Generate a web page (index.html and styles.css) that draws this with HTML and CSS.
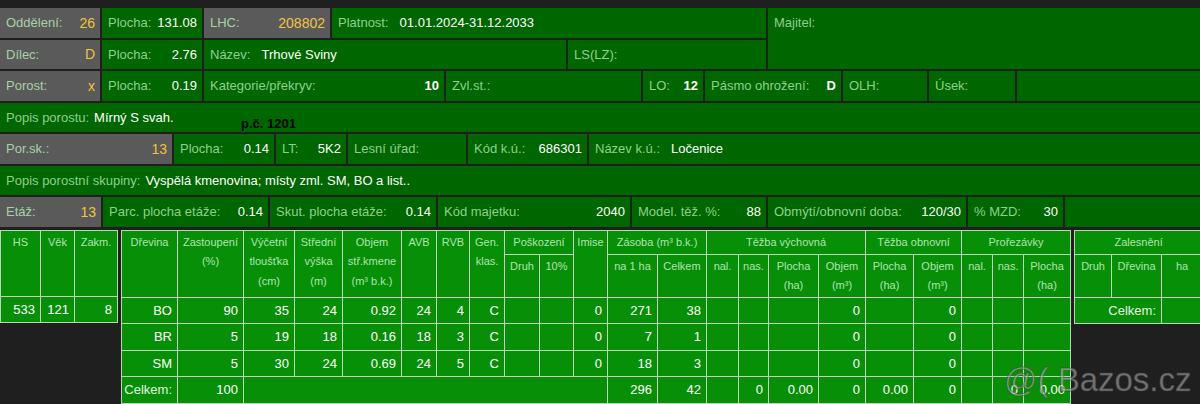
FILE: index.html
```html
<!DOCTYPE html>
<html lang="cs">
<head>
<meta charset="utf-8">
<title>Porost</title>
<link rel="stylesheet" href="styles.css">
</head>
<body>
<div class="page">
  <div class="top">
    <div class="top-left">
      <div class="row">
        <div class="cell gray w100"><span class="lbl">Oddělení:</span><span class="val org">26</span></div>
        <div class="cell w100"><span class="lbl">Plocha:</span><span class="val">131.08</span></div>
        <div class="cell gray w126"><span class="lbl">LHC:</span><span class="val org">208802</span></div>
        <div class="cell grow"><span class="lbl">Platnost:</span><span class="val near">01.01.2024-31.12.2033</span></div>
      </div>
      <div class="row">
        <div class="cell gray w100"><span class="lbl">Dílec:</span><span class="val org">D</span></div>
        <div class="cell w100"><span class="lbl">Plocha:</span><span class="val">2.76</span></div>
        <div class="cell w362"><span class="lbl">Název:</span><span class="val near">Trhové Sviny</span></div>
        <div class="cell grow"><span class="lbl">LS(LZ):</span></div>
      </div>
    </div>
    <div class="cell majitel"><span class="lbl">Majitel:</span></div>
  </div>

  <div class="row">
    <div class="cell gray w100"><span class="lbl">Porost:</span><span class="val org">x</span></div>
    <div class="cell w100"><span class="lbl">Plocha:</span><span class="val">0.19</span></div>
    <div class="cell w240"><span class="lbl">Kategorie/překryv:</span><span class="val b">10</span></div>
    <div class="cell w195"><span class="lbl">Zvl.st.:</span></div>
    <div class="cell w60"><span class="lbl">LO:</span><span class="val b">12</span></div>
    <div class="cell w136"><span class="lbl">Pásmo ohrožení:</span><span class="val b">D</span></div>
    <div class="cell w84"><span class="lbl">OLH:</span></div>
    <div class="cell w86"><span class="lbl">Úsek:</span></div>
    <div class="cell grow"></div>
  </div>

  <div class="row">
    <div class="cell grow"><span class="lbl">Popis porostu:</span><span class="val near-s">Mírný S svah.</span></div>
  </div>

  <div class="row">
    <div class="cell gray w172"><span class="lbl">Por.sk.:</span><span class="val org">13</span></div>
    <div class="cell w100"><span class="lbl">Plocha:</span><span class="val">0.14</span></div>
    <div class="cell w70"><span class="lbl">LT:</span><span class="val">5K2</span></div>
    <div class="cell w118"><span class="lbl">Lesní úřad:</span></div>
    <div class="cell w119"><span class="lbl">Kód k.ú.:</span><span class="val">686301</span></div>
    <div class="cell grow"><span class="lbl">Název k.ú.:</span><span class="val near">Ločenice</span></div>
  </div>

  <div class="row">
    <div class="cell grow"><span class="lbl">Popis porostní skupiny:</span><span class="val near-s">Vyspělá kmenovina; místy zml. SM, BO a list..</span></div>
  </div>

  <div class="row">
    <div class="cell gray w101"><span class="lbl">Etáž:</span><span class="val org">13</span></div>
    <div class="cell w165"><span class="lbl">Parc. plocha etáže:</span><span class="val">0.14</span></div>
    <div class="cell w166"><span class="lbl">Skut. plocha etáže:</span><span class="val">0.14</span></div>
    <div class="cell w192"><span class="lbl">Kód majetku:</span><span class="val">2040</span></div>
    <div class="cell w134"><span class="lbl">Model. těž. %:</span><span class="val">88</span></div>
    <div class="cell w198"><span class="lbl">Obmýtí/obnovní doba:</span><span class="val">120/30</span></div>
    <div class="cell w95"><span class="lbl">% MZD:</span><span class="val">30</span></div>
    <div class="cell grow"></div>
  </div>

  <div class="tables">
    <table class="t1">
      <colgroup><col class="c40"><col class="c34"><col class="c43"></colgroup>
      <tr class="hr-big"><th>HS</th><th>Věk</th><th>Zakm.</th></tr>
      <tr class="dr"><td>533</td><td>121</td><td>8</td></tr>
    </table>

    <table class="t2">
      <colgroup>
        <col class="c56"><col class="c66"><col class="c51"><col class="c48"><col class="c59">
        <col class="c35"><col class="c33"><col class="c35"><col class="c35"><col class="c34">
        <col class="c34"><col class="c50"><col class="c49"><col class="c32"><col class="c30">
        <col class="c50"><col class="c47"><col class="c48"><col class="c48"><col class="c31">
        <col class="c31"><col class="c47">
      </colgroup>
      <tr class="hr1">
        <th rowspan="2">Dřevina</th>
        <th rowspan="2">Zastoupení<br>(%)</th>
        <th rowspan="2">Výčetní<br>tloušťka<br>(cm)</th>
        <th rowspan="2">Střední<br>výška<br>(m)</th>
        <th rowspan="2">Objem<br>stř.kmene<br>(m³ b.k.)</th>
        <th rowspan="2">AVB</th>
        <th rowspan="2">RVB</th>
        <th rowspan="2">Gen.<br>klas.</th>
        <th colspan="2">Poškození</th>
        <th rowspan="2">Imise</th>
        <th colspan="2">Zásoba (m³ b.k.)</th>
        <th colspan="4">Těžba výchovná</th>
        <th colspan="2">Těžba obnovní</th>
        <th colspan="3">Prořezávky</th>
      </tr>
      <tr class="hr2">
        <th>Druh</th><th>10%</th>
        <th>na 1 ha</th><th>Celkem</th>
        <th>nal.</th><th>nas.</th><th>Plocha<br>(ha)</th><th>Objem<br>(m³)</th>
        <th>Plocha<br>(ha)</th><th>Objem<br>(m³)</th>
        <th>nal.</th><th>nas.</th><th>Plocha<br>(ha)</th>
      </tr>
      <tr class="dr">
        <td>BO</td><td>90</td><td>35</td><td>24</td><td>0.92</td><td>24</td><td>4</td><td>C</td><td></td><td></td><td>0</td><td>271</td><td>38</td><td></td><td></td><td></td><td>0</td><td></td><td>0</td><td></td><td></td><td></td>
      </tr>
      <tr class="dr">
        <td>BR</td><td>5</td><td>19</td><td>18</td><td>0.16</td><td>18</td><td>3</td><td>C</td><td></td><td></td><td>0</td><td>7</td><td>1</td><td></td><td></td><td></td><td>0</td><td></td><td>0</td><td></td><td></td><td></td>
      </tr>
      <tr class="dr">
        <td>SM</td><td>5</td><td>30</td><td>24</td><td>0.69</td><td>24</td><td>5</td><td>C</td><td></td><td></td><td>0</td><td>18</td><td>3</td><td></td><td></td><td></td><td>0</td><td></td><td>0</td><td></td><td></td><td></td>
      </tr>
      <tr class="dr">
        <td class="tot">Celkem:</td><td>100</td><td colspan="9"></td><td>296</td><td>42</td><td></td><td>0</td><td>0.00</td><td>0</td><td>0.00</td><td>0</td><td></td><td>0</td><td>0.00</td>
      </tr>
    </table>

    <table class="t3">
      <colgroup><col class="c37"><col class="c50"><col class="c41"></colgroup>
      <tr class="hr1"><th colspan="3">Zalesnění</th></tr>
      <tr class="hr2"><th>Druh</th><th>Dřevina</th><th>ha</th></tr>
      <tr class="dr"><td colspan="2" class="tot">Celkem:</td><td></td></tr>
    </table>
  </div>

  <div class="pc">p.č. 1201</div>
  <div class="wm">@( Bazos.cz</div>
</div>
</body>
</html>
```

FILE: styles.css
```css
* { box-sizing: border-box; }
html, body { margin: 0; padding: 0; background: #1f1f1f; }
body { font-family: "Liberation Sans", Arial, sans-serif; font-size: 13px; }

.page {
  position: relative;
  width: 1200px;
  height: 404px;
  overflow: hidden;
  padding-top: 8px;
  display: flex;
  flex-direction: column;
  gap: 2px;
  background: #1f1f1f;
}

.top {
  display: grid;
  grid-template-columns: 766px 1fr;
  gap: 2px;
}
.top-left { display: flex; flex-direction: column; gap: 2px; }

.row { display: flex; gap: 2px; height: 29.5px; }

.cell {
  display: flex;
  align-items: center;
  padding: 0 5px 0 6px;
  background: #006600;
  white-space: nowrap;
  overflow: hidden;
  flex: 0 0 auto;
}
.cell.gray { background: #5a5a5a; }
.cell.grow { flex: 1 1 auto; }
.majitel { align-items: flex-start; padding-top: 7px; }

.lbl { color: #8ed08e; }
.gray .lbl { color: #a6d2a6; }
.val { color: #ffffff; margin-left: auto; }
.val.near { margin-left: 11px; }
.val.near-s { margin-left: 5px; }
.val.org { color: #f2c43c; font-size: 14px; }
.val.b { font-weight: bold; }

.w60 { width: 60px; }
.w70 { width: 70px; }
.w84 { width: 84px; }
.w86 { width: 86px; }
.w95 { width: 95px; }
.w100 { width: 100px; }
.w101 { width: 101px; }
.w118 { width: 118px; }
.w119 { width: 119px; }
.w126 { width: 126px; }
.w134 { width: 134px; }
.w136 { width: 136px; }
.w165 { width: 165px; }
.w166 { width: 166px; }
.w172 { width: 172px; }
.w192 { width: 192px; }
.w195 { width: 195px; }
.w198 { width: 198px; }
.w240 { width: 240px; }
.w362 { width: 362px; }

.tables {
  display: flex;
  gap: 3px;
  align-items: flex-start;
  margin-top: 1px;
}

table {
  border-collapse: collapse;
  table-layout: fixed;
  background: #088f08;
  color: #ffffff;
  font-size: 13px;
}
.t1 { width: 117px; }
.t2 { width: 949px; }
.t3 { width: 128px; }

th, td { border: 1px solid #bcd6bc; }
th {
  font-weight: normal;
  font-size: 11px;
  line-height: 19.5px;
  color: #b0e4b0;
  vertical-align: top;
  text-align: center;
  padding: 2px 1px 0;
}
td {
  text-align: right;
  padding: 0 5px 0 2px;
  height: 26.5px;
}
td.tot { color: #e6f2e6; }

.hr-big { height: 66px; }
.hr1 { height: 24px; }
.hr2 { height: 43px; }

.c30 { width: 30px; } .c31 { width: 31px; } .c32 { width: 32px; } .c33 { width: 33px; }
.c34 { width: 34px; } .c35 { width: 35px; } .c37 { width: 37px; } .c40 { width: 40px; }
.c41 { width: 41px; } .c43 { width: 43px; } .c47 { width: 47px; } .c48 { width: 48px; }
.c49 { width: 49px; } .c50 { width: 50px; } .c51 { width: 51px; } .c56 { width: 56px; }
.c59 { width: 59px; } .c66 { width: 66px; }

.pc {
  position: absolute;
  left: 241px;
  top: 116px;
  font-weight: bold;
  font-size: 13px;
  color: #000;
}
.wm {
  position: absolute;
  left: 1004px;
  top: 361px;
  font-size: 33px;
  color: rgba(190, 190, 190, 0.55);
  -webkit-text-stroke: 1px rgba(60, 60, 60, 0.5);
  white-space: nowrap;
}
```
